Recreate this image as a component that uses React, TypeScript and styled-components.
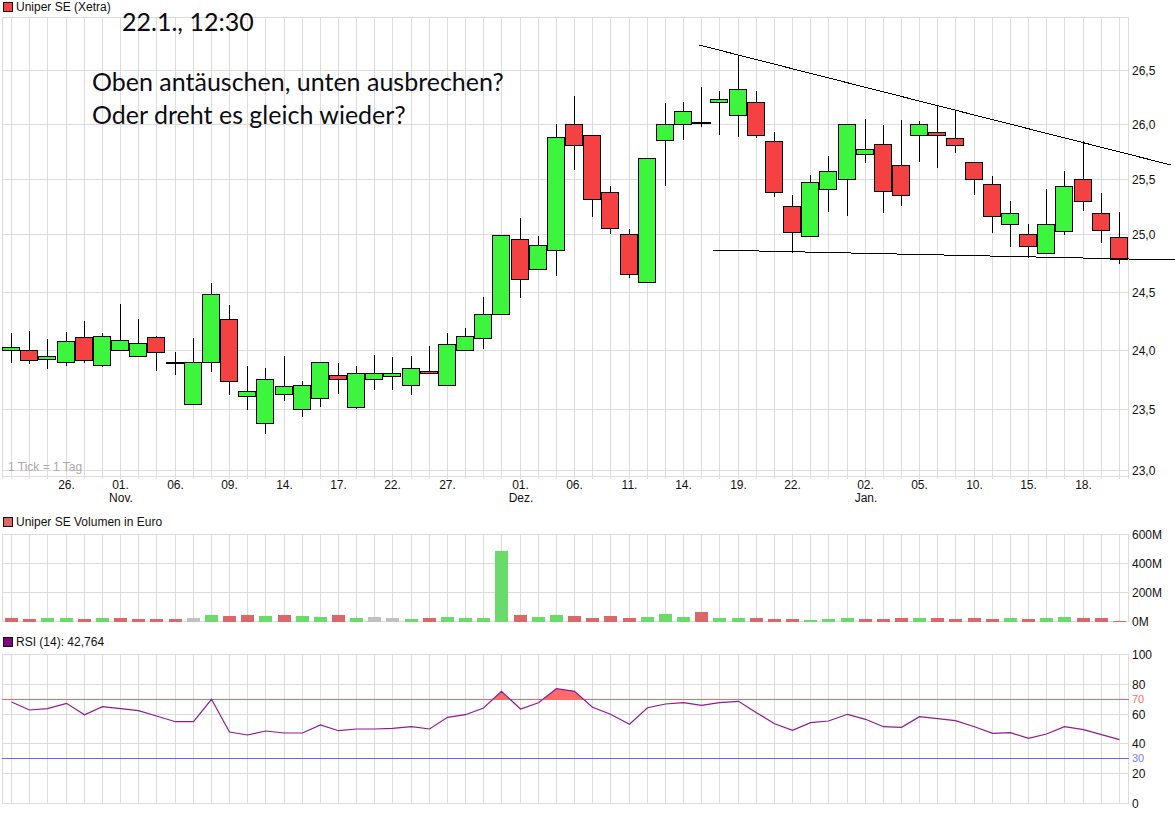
import React from 'react';
import styled, { createGlobalStyle } from 'styled-components';

const GlobalStyle = createGlobalStyle`
  html, body {
    margin: 0;
    padding: 0;
    background: #fff;
  }
  body {
    font-family: "Liberation Sans", Arial, sans-serif;
  }
`;

const GRID = '#dcdcdc';
const UP = '#3cf53c';
const DOWN = '#f44242';
const VOL_UP = '#6adb6a';
const VOL_DOWN = '#d96868';
const VOL_FLAT = '#c0c0c0';

const Page = styled.div`
  position: relative;
  width: 1175px;
  height: 815px;
  overflow: hidden;
  display: flex;
  flex-direction: column;
`;

const LegendRow = styled.div`
  height: 13px;
  display: flex;
  align-items: center;
  gap: 3px;
  padding-left: 3px;
  font-size: 12px;
  color: #111;
  white-space: nowrap;
`;

const Swatch = styled.span<{ $color: string }>`
  width: 8px;
  height: 8px;
  border: 1px solid #111;
  background: ${(p) => p.$color};
  flex: none;
`;

const ChartSvg = styled.svg`
  display: block;
  flex: none;
`;

const GridLine = styled.line`
  stroke: ${GRID};
  stroke-width: 1;
  shape-rendering: crispEdges;
`;

const Wick = styled.line`
  stroke: #000;
  stroke-width: 1;
  shape-rendering: crispEdges;
`;

const Doji = styled.line`
  stroke: #000;
  stroke-width: 2;
  shape-rendering: crispEdges;
`;

const CandleBody = styled.rect<{ $up: boolean }>`
  fill: ${(p) => (p.$up ? UP : DOWN)};
  stroke: #000;
  stroke-width: 1;
  shape-rendering: crispEdges;
`;

const VolumeBar = styled.rect<{ $color: string }>`
  fill: ${(p) => p.$color};
  shape-rendering: crispEdges;
`;

const TrendLine = styled.line`
  stroke: #000;
  stroke-width: 1;
  shape-rendering: crispEdges;
`;

const LevelLine = styled.line<{ $color: string }>`
  stroke: ${(p) => p.$color};
  stroke-width: 1;
  shape-rendering: crispEdges;
`;

const RsiLine = styled.polyline`
  fill: none;
  stroke: #8f1b8f;
  stroke-width: 1.2;
`;

const RsiOverbought = styled.polygon`
  fill: #ff6a6a;
`;

const AxisLabel = styled.text<{ $color?: string; $small?: boolean }>`
  font-size: ${(p) => (p.$small ? '11px' : '12px')};
  fill: ${(p) => p.$color ?? '#111'};
`;

const TimeLabel = styled.text`
  font-size: 12px;
  fill: #111;
  text-anchor: middle;
`;

const TickNote = styled.text`
  font-size: 12px;
  fill: #aaa;
`;

const NoteTitle = styled.div`
  position: absolute;
  left: 122px;
  top: 5px;
  font-family: Lato, "Open Sans", sans-serif;
  font-size: 25px;
  line-height: 32px;
  color: #0c0c14;
  white-space: nowrap;
`;

const NoteBody = styled.div`
  position: absolute;
  left: 92px;
  top: 65px;
  font-family: Lato, "Open Sans", sans-serif;
  font-size: 25px;
  line-height: 33px;
  color: #0c0c14;
  white-space: nowrap;
`;

// pixel column of every trading day
const XS = [
  11, 29, 47, 66, 84, 102, 120, 138, 156, 175, 193, 211, 229, 247, 265, 284, 302, 320, 338, 356, 374,
  392, 411, 429, 447, 465, 483, 501, 520, 538, 556, 574, 592, 610, 629, 647, 665, 683, 701, 719, 738,
  756, 774, 792, 810, 828, 847, 865, 883, 901, 919, 937, 955, 974, 992, 1010, 1028, 1046, 1064, 1083,
  1101, 1119,
];

type Candle = [kind: 'u' | 'd' | 'x', high: number, top: number, bottom: number, low: number];

const CANDLES: Candle[] = [
  ['u', 333, 347, 350, 362], ['d', 331, 350, 360, 363], ['u', 339, 356, 359, 368], ['u', 332, 341, 362, 365],
  ['d', 321, 337, 360, 362], ['u', 333, 336, 365, 366], ['u', 304, 340, 350, 350], ['u', 319, 343, 356, 356],
  ['d', 336, 337, 352, 370], ['x', 352, 362, 362, 374], ['u', 338, 362, 404, 404], ['u', 283, 294, 362, 371],
  ['d', 305, 319, 381, 394], ['u', 366, 391, 396, 409], ['u', 368, 379, 423, 433], ['u', 356, 386, 394, 400],
  ['u', 381, 385, 409, 416], ['u', 362, 362, 398, 406], ['d', 363, 375, 379, 393], ['u', 366, 373, 407, 408],
  ['u', 355, 373, 379, 389], ['u', 357, 373, 376, 389], ['u', 356, 368, 385, 394], ['d', 346, 371, 373, 373],
  ['u', 333, 344, 385, 385], ['u', 328, 336, 350, 350], ['u', 297, 314, 338, 348], ['u', 235, 235, 314, 314],
  ['d', 218, 239, 279, 297], ['u', 236, 245, 269, 269], ['u', 124, 137, 250, 275], ['d', 96, 124, 145, 169],
  ['d', 135, 135, 199, 216], ['d', 186, 192, 228, 233], ['d', 229, 234, 274, 277], ['u', 158, 158, 282, 282],
  ['u', 103, 124, 140, 185], ['u', 102, 111, 124, 139], ['x', 87, 122, 122, 126], ['u', 91, 99, 102, 134],
  ['u', 55, 89, 115, 136], ['d', 91, 102, 135, 137], ['d', 132, 141, 192, 196], ['d', 195, 206, 232, 252],
  ['u', 175, 182, 236, 236], ['u', 156, 171, 189, 211], ['u', 124, 124, 179, 215], ['u', 119, 149, 154, 162],
  ['d', 125, 144, 191, 212], ['d', 120, 165, 195, 205], ['u', 121, 124, 135, 161], ['d', 106, 132, 135, 167],
  ['d', 110, 138, 145, 152], ['d', 162, 162, 179, 194], ['d', 176, 184, 216, 232], ['u', 201, 213, 224, 246],
  ['d', 224, 234, 246, 257], ['u', 189, 224, 253, 253], ['u', 171, 186, 231, 234], ['d', 141, 179, 201, 210],
  ['d', 193, 213, 230, 242], ['d', 212, 237, 259, 263],
];

const PRICE_LEVELS: [number, string][] = [
  [70, '26,5'], [124, '26,0'], [179, '25,5'], [234, '25,0'], [292, '24,5'], [350, '24,0'], [409, '23,5'], [470, '23,0'],
];

const TIME_LABELS: [number, string, string?][] = [
  [66, '26.'], [120, '01.', 'Nov.'], [175, '06.'], [229, '09.'], [284, '14.'], [338, '17.'], [392, '22.'], [447, '27.'],
  [520, '01.', 'Dez.'], [574, '06.'], [629, '11.'], [683, '14.'], [738, '19.'], [792, '22.'], [865, '02.', 'Jan.'],
  [919, '05.'], [974, '10.'], [1028, '15.'], [1083, '18.'],
];

// g = rising day, r = falling day, n = unchanged
const VOLUMES: [string, number][] = [
  ['r', 4], ['r', 3], ['g', 4], ['g', 4], ['r', 3], ['g', 4], ['r', 4], ['r', 3], ['r', 3], ['r', 3], ['n', 4],
  ['g', 7], ['r', 6], ['r', 7], ['g', 6], ['r', 7], ['g', 6], ['g', 5], ['r', 7], ['g', 4], ['n', 5], ['n', 4],
  ['g', 3], ['r', 4], ['g', 5], ['g', 4], ['g', 4], ['g', 71], ['r', 7], ['g', 5], ['g', 7], ['r', 6], ['r', 4],
  ['r', 6], ['r', 4], ['g', 5], ['g', 8], ['g', 5], ['r', 10], ['g', 4], ['g', 4], ['r', 4], ['r', 3], ['r', 3],
  ['g', 2], ['g', 3], ['g', 4], ['r', 3], ['r', 3], ['r', 4], ['g', 4], ['r', 4], ['r', 3], ['r', 4], ['r', 3],
  ['g', 4], ['r', 3], ['g', 4], ['g', 5], ['r', 4], ['r', 4], ['r', 1],
];

const VOLUME_COLORS: Record<string, string> = { g: VOL_UP, r: VOL_DOWN, n: VOL_FLAT };

const VOLUME_LEVELS: [number, string][] = [
  [534, '600M'], [563, '400M'], [592, '200M'], [621, '0M'],
];

const RSI_LEVELS: [number, string][] = [
  [654, '100'], [684, '80'], [714, '60'], [743, '40'], [773, '20'], [803, '0'],
];

const RSI_VALUES = [
  702, 710, 708.7, 703.3, 714.7, 706.7, 708.7, 710.7, 716, 721.7, 721.7, 699.3, 732, 735, 731, 733, 733, 725, 730.7,
  729, 729, 728.3, 726.7, 729, 717.3, 714.7, 708, 691.3, 709, 702.7, 688.7, 691.3, 707.3, 714.3, 724.3, 707.7, 704,
  702.7, 705.3, 702.7, 701.3, 712.7, 723.7, 730.3, 722.7, 721, 714.3, 719.3, 726.7, 727.3, 716.7, 718.7, 720.7,
  726.7, 733.3, 732.7, 738.3, 734, 726.7, 729.7, 734.7, 739.7,
];

const VGrid: React.FC<{ top: number; bottom: number }> = ({ top, bottom }) => (
  <>
    <GridLine x1={2.5} x2={2.5} y1={top} y2={bottom} />
    {XS.map((x) => (
      <GridLine key={x} x1={x + 0.5} x2={x + 0.5} y1={top} y2={bottom} />
    ))}
    <GridLine x1={1128.5} x2={1128.5} y1={top} y2={bottom} />
  </>
);

const HLine: React.FC<{ y: number }> = ({ y }) => <GridLine x1={2} x2={1129} y1={y + 0.5} y2={y + 0.5} />;

const PricePanel: React.FC = () => (
  <ChartSvg width={1175} height={502} viewBox="0 13 1175 502">
    <VGrid top={17} bottom={479} />
    <HLine y={17} />
    <HLine y={476} />
    {PRICE_LEVELS.map(([y, label]) => (
      <React.Fragment key={label}>
        <HLine y={y} />
        <AxisLabel x={1132} y={y + 5}>{label}</AxisLabel>
      </React.Fragment>
    ))}
    <TickNote x={8} y={471}>1 Tick = 1 Tag</TickNote>
    {CANDLES.map(([kind, high, top, bottom, low], i) => {
      const cx = XS[i] + 0.5;
      return (
        <g key={i}>
          <Wick x1={cx} x2={cx} y1={high} y2={low + 1} />
          {kind === 'x' ? (
            <Doji x1={cx - 9.5} x2={cx + 9.5} y1={top + 1} y2={top + 1} />
          ) : (
            <CandleBody $up={kind === 'u'} x={cx - 9} y={top + 0.5} width={17} height={bottom - top} />
          )}
        </g>
      );
    })}
    <TrendLine x1={699} y1={45} x2={1171} y2={165} />
    <TrendLine x1={712} y1={250} x2={1175} y2={260} />
    {TIME_LABELS.map(([x, day, month]) => (
      <React.Fragment key={x}>
        <TimeLabel x={x + 0.5} y={489}>{day}</TimeLabel>
        {month && <TimeLabel x={x + 1} y={502}>{month}</TimeLabel>}
      </React.Fragment>
    ))}
  </ChartSvg>
);

const VolumePanel: React.FC = () => (
  <ChartSvg width={1175} height={107} viewBox="0 528 1175 107">
    <VGrid top={534} bottom={622} />
    {VOLUME_LEVELS.map(([y, label]) => (
      <React.Fragment key={label}>
        <HLine y={y} />
        <AxisLabel x={1132} y={y + 5}>{label}</AxisLabel>
      </React.Fragment>
    ))}
    {VOLUMES.map(([tone, height], i) => (
      <VolumeBar
        key={i}
        $color={VOLUME_COLORS[tone]}
        x={XS[i] - 6}
        y={622 - height}
        width={13}
        height={height}
      />
    ))}
  </ChartSvg>
);

const RsiPanel: React.FC = () => (
  <ChartSvg width={1175} height={167} viewBox="0 648 1175 167">
    <VGrid top={654} bottom={804} />
    {RSI_LEVELS.map(([y, label]) => (
      <React.Fragment key={label}>
        <HLine y={y} />
        <AxisLabel x={1132} y={y + 5}>{label}</AxisLabel>
      </React.Fragment>
    ))}
    <LevelLine $color="#ec6a6a" x1={2} x2={1129} y1={699.5} y2={699.5} />
    <LevelLine $color="#6666ff" x1={2} x2={1129} y1={758.5} y2={758.5} />
    <AxisLabel $small $color="#ff6a6a" x={1132} y={703}>70</AxisLabel>
    <AxisLabel $small $color="#7a7aff" x={1132} y={762}>30</AxisLabel>
    <RsiOverbought points="493,699.5 501.5,691.3 510,699.5" />
    <RsiOverbought points="542.8,699.5 556.5,688.7 574.5,691.3 583.5,699.5" />
    <RsiLine points={RSI_VALUES.map((y, i) => `${XS[i] + 0.5},${y}`).join(' ')} />
  </ChartSvg>
);

const App: React.FC = () => (
  <Page>
    <GlobalStyle />
    <LegendRow>
      <Swatch $color={DOWN} />
      Uniper SE (Xetra)
    </LegendRow>
    <PricePanel />
    <LegendRow>
      <Swatch $color={VOL_DOWN} />
      Uniper SE Volumen in Euro
    </LegendRow>
    <VolumePanel />
    <LegendRow>
      <Swatch $color="#800080" />
      RSI (14): 42,764
    </LegendRow>
    <RsiPanel />
    <NoteTitle>22.1., 12:30</NoteTitle>
    <NoteBody>
      Oben antäuschen, unten ausbrechen?
      <br />
      Oder dreht es gleich wieder?
    </NoteBody>
  </Page>
);

export default App;
